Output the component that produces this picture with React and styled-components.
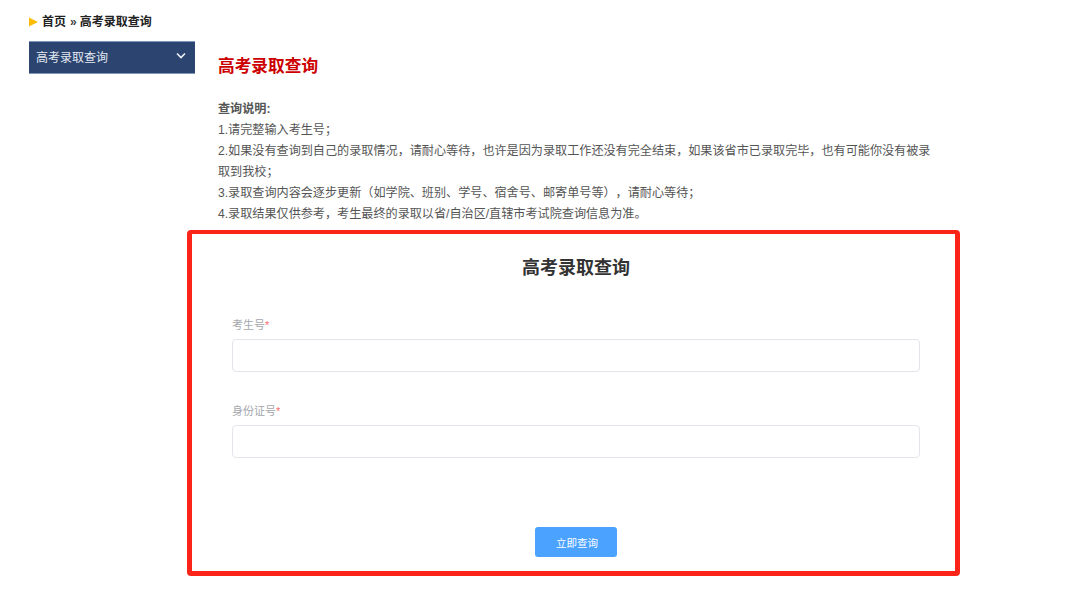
import React from 'react';
import styled, { createGlobalStyle } from 'styled-components';

const GlobalStyle = createGlobalStyle`
  html, body {
    margin: 0;
    padding: 0;
    background: #fff;
    font-family: "Liberation Sans", "Noto Sans CJK SC", sans-serif;
    text-spacing-trim: space-all;
  }
`;

const Page = styled.div`
  width: 1080px;
  height: 596px;
  overflow: hidden;
  padding: 15px 0 0 29px;
  box-sizing: border-box;
`;

const Crumbs = styled.div`
  display: flex;
  align-items: center;
  height: 14px;
  font-size: 12px;
  font-weight: bold;
  line-height: 14px;
  color: #222;
`;

const CrumbMark = styled.svg`
  width: 9px;
  height: 10px;
  margin-right: 4px;
`;

const CrumbSep = styled.span`
  margin: 0 3px 0 4px;
  color: #444;
`;

const Layout = styled.div`
  display: flex;
  margin-top: 12px;
`;

const Side = styled.div`
  flex: none;
  width: 166px;
  height: 33px;
  padding: 0 7px;
  box-sizing: border-box;
  display: flex;
  justify-content: space-between;
  background: #2b4470;
  border-top: 1px solid #7f97bd;
  border-bottom: 1px solid #7f97bd;
  color: #e4e9f2;
  font-size: 12px;
  line-height: 32px;
`;

const Chevron = styled.svg`
  width: 12px;
  height: 12px;
  margin-top: 8px;
  margin-right: 1px;
`;

const Main = styled.div`
  width: 773px;
  margin-left: -8px;
`;

const Notes = styled.div`
  padding-left: 31px;
`;

const Heading = styled.h1`
  margin: 15px 0 0;
  font-size: 16.7px;
  line-height: 22px;
  font-weight: bold;
  color: #cc0000;
`;

const Text = styled.div`
  width: 716px;
  margin-top: 21px;
  font-size: 12.12px;
  line-height: 21px;
  color: #555;
`;

const Strong = styled.div`
  font-weight: bold;
`;

const FormBox = styled.form`
  height: 346px;
  margin-top: 5px;
  padding: 0 35px 0 40px;
  box-sizing: border-box;
  display: flex;
  flex-direction: column;
  border-style: solid;
  border-color: #fa2419;
  border-width: 4px 5px 5px 5px;
  border-radius: 4px;
`;

const FormTitle = styled.h2`
  margin: 22px 0 0;
  font-size: 18px;
  line-height: 24px;
  font-weight: bold;
  text-align: center;
  color: #333;
`;

const Field = styled.div`
  margin-top: ${(p) => p.$top}px;
`;

const Label = styled.label`
  display: block;
  height: 15px;
  font-size: 11px;
  line-height: 15px;
  color: #a4a7ad;
`;

const Req = styled.span`
  color: #f56c6c;
`;

const Input = styled.input`
  display: block;
  width: 100%;
  height: 33px;
  margin-top: 6px;
  padding: 0 12px;
  box-sizing: border-box;
  background: #fff;
  border: 1px solid #e2e5ea;
  border-radius: 4px;
  outline: none;
`;

const Submit = styled.button`
  align-self: center;
  width: 82px;
  height: 30px;
  margin-top: 69px;
  padding: 0 0 0 2px;
  background: #4ba3ff;
  border: 0;
  border-radius: 3px;
  color: #fff;
  font-family: inherit;
  font-size: 10.5px;
`;

const App = () => {
  return (
    <Page>
      <GlobalStyle />
      <Crumbs>
        <CrumbMark viewBox="0 0 9 10">
          <path d="M0 0.5 L9 5 L0 9.5 Z" fill="#fbbc05" />
        </CrumbMark>
        首页
        <CrumbSep>»</CrumbSep>
        高考录取查询
      </Crumbs>
      <Layout>
        <Side>
          高考录取查询
          <Chevron viewBox="0 0 12 12" fill="none" stroke="#eef2f8" strokeWidth="1.6">
            <path d="M2 3.5 L6 7.5 L10 3.5" />
          </Chevron>
        </Side>
        <Main>
          <Notes>
            <Heading>高考录取查询</Heading>
            <Text>
              <Strong>查询说明:</Strong>
              <div>1.请完整输入考生号；</div>
              <div>2.如果没有查询到自己的录取情况，请耐心等待，也许是因为录取工作还没有完全结束，如果该省市已录取完毕，也有可能你没有被录取到我校；</div>
              <div>3.录取查询内容会逐步更新（如学院、班别、学号、宿舍号、邮寄单号等），请耐心等待；</div>
              <div>4.录取结果仅供参考，考生最终的录取以省/自治区/直辖市考试院查询信息为准。</div>
            </Text>
          </Notes>
          <FormBox>
            <FormTitle>高考录取查询</FormTitle>
            <Field $top={38}>
              <Label>考生号<Req>*</Req></Label>
              <Input />
            </Field>
            <Field $top={32}>
              <Label>身份证号<Req>*</Req></Label>
              <Input />
            </Field>
            <Submit type="button">立即查询</Submit>
          </FormBox>
        </Main>
      </Layout>
    </Page>
  );
};

export default App;
